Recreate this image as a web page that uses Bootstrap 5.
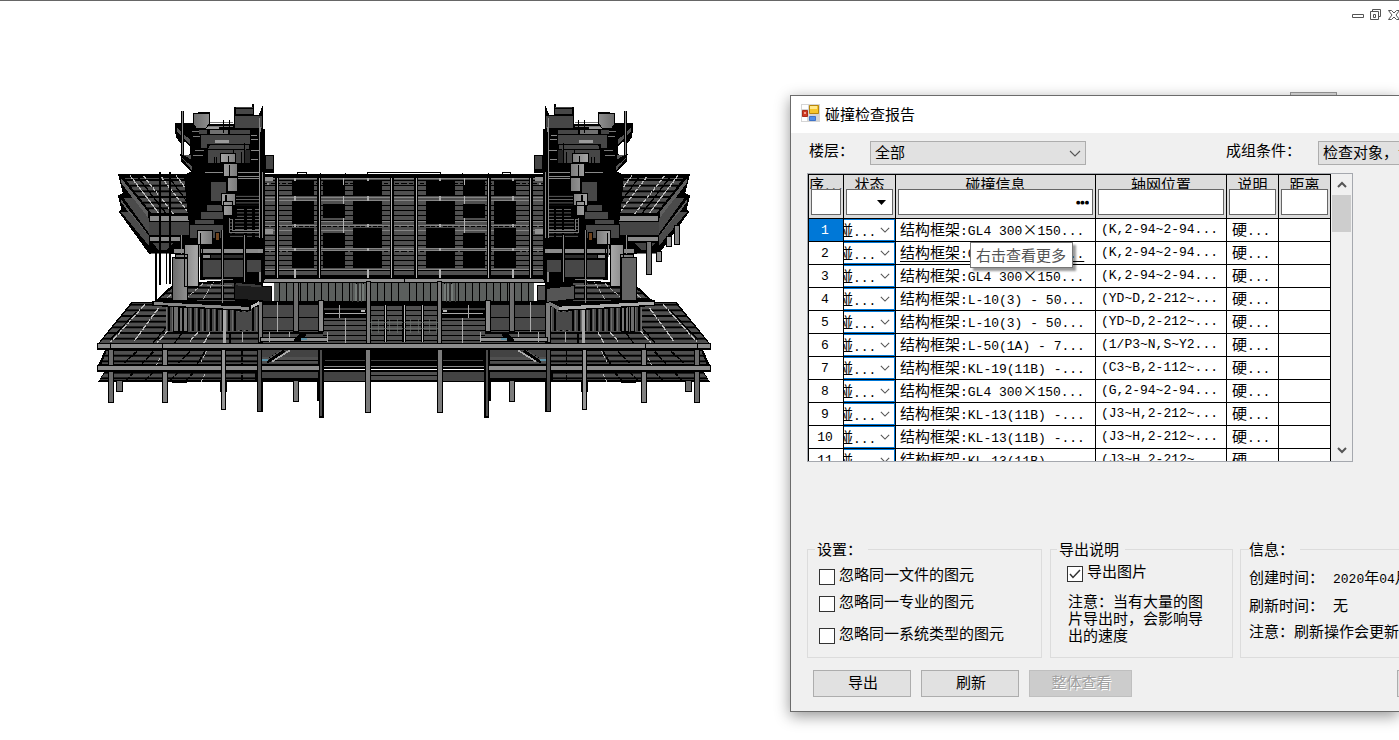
<!DOCTYPE html>
<html lang="zh-CN">
<head>
<meta charset="utf-8">
<meta name="viewport" content="width=device-width, initial-scale=1">
<title>碰撞检查报告</title>
<link href="https://cdn.jsdelivr.net/npm/bootstrap@5.3.0/dist/css/bootstrap.min.css" rel="stylesheet">
<style>
body{font:15px/18px "Noto Sans CJK SC",sans-serif;color:#000;background:#fff;overflow:hidden;min-height:100vh}
.la{font:13px/18px "Liberation Mono",monospace;white-space:pre}
.workspace{display:grid;grid-template-columns:790fr 609fr;border-top:1px solid #666;min-height:100vh;position:relative}
.model{width:100%;max-width:630px;margin:94px 0 0 90px;display:block}
.winctl{position:absolute;right:0;top:7px;line-height:0}
.behind{position:absolute;right:62px;top:91px;width:47px;height:12px;border:1px solid #999;background:#ddd}
.dlg{position:relative;margin-top:94px;align-self:start;min-width:0;background:#f0f0f0;border:1px solid #6b6b6b;border-right:0;box-shadow:0 4px 14px rgba(0,0,0,.42)}
.dlg-inner{overflow:hidden}
.titlebar{height:37px;background:#fff;padding:0 0 2px 10px;gap:5px}
.body-pad{padding:8px 0 14px 16px}
.floor-label{width:63px;padding-left:2px}
.cond-label{width:215px}
.combo{appearance:none;height:24px;border:1px solid #adadad;border-radius:0;background:#e1e1e1 no-repeat right 4px center/12px 7px url("data:image/svg+xml,%3Csvg xmlns='http://www.w3.org/2000/svg' viewBox='0 0 12 7'%3E%3Cpath d='M1 1l5 5 5-5' fill='none' stroke='%23555' stroke-width='1.1'/%3E%3C/svg%3E");padding:0 20px 2px 4px;line-height:18px;color:#000;width:216px}
.cond{margin-left:17px}
.gridbox{width:546px;height:289px;border:1px solid #a5a8ae;overflow:hidden;margin-top:8px}
.clash{table-layout:fixed;border-collapse:separate;border-spacing:0;width:523px;border:solid #000;border-width:1px 0 0 1px;background:#fff;flex:none;align-self:flex-start}
.clash th,.clash td{border:solid #000;border-width:0 1px 1px 0;padding:0;font-weight:400;white-space:nowrap;overflow:hidden}
.clash th{height:44px;background:#dcdcdc;text-align:center;vertical-align:top}
.clash td{height:23px;line-height:18px;padding:0 0 0 4px;vertical-align:top}
.clash td>span{display:block;height:22px;padding-top:1px}
.hd{display:block;height:14px;line-height:17px;overflow:hidden}
.no-hd .la{font-size:11px}
.filter{display:block;margin:0 2px;width:calc(100% - 4px);height:26px;border:1px solid #666;border-radius:0;background:#fff;padding:0 3px;text-align:right;color:#000;font:bold 5px/22px "DejaVu Sans",sans-serif}
select.filter{appearance:none;background:#fff no-repeat right 6px center/9px 5px url("data:image/svg+xml,%3Csvg xmlns='http://www.w3.org/2000/svg' viewBox='0 0 9 5'%3E%3Cpath d='M0 0h9L4.5 5z'/%3E%3C/svg%3E")}
.clash td.no{text-align:center;padding:0 2px 0 0}
.clash .no .la{padding-top:3px}
.clash td.pos,.clash td.say{padding-left:5px}
.clash .pos .la{padding-top:2px}
.sel{background:#0078d7;color:#fff}
.clash td.st{padding:0;position:relative}
.st select{appearance:none;display:block;width:100%;height:22px;border:1px solid #0078d7;border-left:0;border-radius:0;color:transparent;background:#fff no-repeat right 4px center/10px 6px url("data:image/svg+xml,%3Csvg xmlns='http://www.w3.org/2000/svg' viewBox='0 0 12 7'%3E%3Cpath d='M1 1l5 5 5-5' fill='none' stroke='%23555' stroke-width='1.3'/%3E%3C/svg%3E")}
.st label{position:absolute;left:-6px;top:2px;pointer-events:none}
.more{text-decoration:underline;text-underline-offset:3px}
.vbar{width:21px;background:#f0f0f0}
.vbar svg{display:block;margin:7px auto 0}
.thumb{width:19px;height:37px;background:#cdcdcd;margin:6px 0 0 1px}
.vbar .down{margin-top:214px}
.tip{position:absolute;left:179px;top:146px;z-index:2;background:#fff;border:1px solid #767676;color:#555;padding:3px 6px 3px 5px;box-shadow:3px 3px 2px rgba(0,0,0,.4)}
.groups{margin-top:77px;display:grid;grid-template-columns:235px 184px 220px;column-gap:7px}
.grp{border:1px solid #dcdcdc;height:119px;padding:0 0 0 11px;min-width:0}
.grp.mid{padding-left:16px;margin-left:1px}
.grp legend{float:none;width:auto;font-size:15px;line-height:20px;margin:0 0 6px -4px;padding:0 6px 0 2px}
.grp.mid legend{margin:0 0 3px -10px}
.grp.last legend{margin:0 0 9px;padding-left:0}
.tick{appearance:none;width:16px;height:16px;border:1px solid #333;background:#fff;margin:4px 4px 0 0;flex:none}
.tick:checked{background:#fff url("data:image/svg+xml,%3Csvg xmlns='http://www.w3.org/2000/svg' viewBox='0 0 14 14'%3E%3Cpath d='M2 7l3 3.5L12 3' fill='none' stroke='%23333' stroke-width='1.5'/%3E%3C/svg%3E")}
.opt{margin-bottom:7px}
.opt.far{margin-top:12px}
.note{line-height:17px;width:145px;padding-left:1px;margin-top:10px}
.info{column-gap:9px;margin-bottom:8px}
.info .la{line-height:16px}
.actions{padding-left:6px;gap:10px;margin-top:12px}
.dbtn{width:98px;height:27px;border:1px solid #adadad;border-radius:0;background:#e1e1e1;color:#000;font-size:15px;line-height:18px;padding:0 0 4px 2px;flex:none}
.dbtn:disabled{width:103px;background:#ccc;border-color:#bfbfbf;color:#a0a0a0;opacity:1;text-shadow:1px 1px #fff}
.dbtn.close-dlg{margin-left:255px}
</style>
</head>
<body>
<div class="workspace">
<main>
<svg class="model" viewBox="0 0 1890 990" shape-rendering="crispEdges" role="img" aria-label="结构模型">
<defs>
<pattern id="deck" width="40" height="17" patternUnits="userSpaceOnUse"><path d="M0 0h40v17H0z"/><path fill="#4f4f4f" d="M0 4h40v10H0z"/></pattern>
<pattern id="wall" width="40" height="15" patternUnits="userSpaceOnUse"><path d="M0 0h40v15H0z"/><path fill="#505050" d="M0 3h40v11H0z"/></pattern>
<pattern id="stair" width="40" height="10" patternUnits="userSpaceOnUse"><path d="M0 0h40v10H0z"/><path fill="#707070" d="M0 3h40v3H0z"/></pattern>
<pattern id="fins" width="21" height="60" patternUnits="userSpaceOnUse"><path fill="#5b5f5d" d="M0 0h21v60H0z"/><path d="M0 0h3v60H0z"/></pattern>
<pattern id="posts" width="18" height="60" patternUnits="userSpaceOnUse"><path fill="#484848" d="M0 0h18v60H0z"/><path d="M0 0h6v60H0z"/><path fill="#6d6d6d" d="M11 0h3v60h-3z"/></pattern>
<linearGradient id="cyl"><stop stop-color="#6b6b6b"/><stop offset=".6" stop-color="#a6a6a6"/><stop offset="1" stop-color="#7a7a7a"/></linearGradient>
</defs>
<g id="half">
<!-- central facade -->
<path d="M520 238h422v320H520z"/><path fill="url(#wall)" d="M525 250h417v290H525z"/>
<path stroke="#858585" stroke-width="3" d="M525 250h417M525 307h417M525 316h417M525 378h417M525 391h417M525 407h417M525 460h417M525 466h417M525 523h417"/>
<path stroke="#000" stroke-width="3" stroke-dasharray="12 5" d="M525 266h417M525 395h417M525 470h417"/>
<path d="M607 258h65v46h-65zM607 318h65v68h-65zM607 399h65v61h-65zM607 468h65v52h-65zM699 258h66v45h-66zM699 327h66v43h-66zM699 414h66v46h-66zM699 468h66v52h-66zM790 258h86v46h-86zM790 318h86v68h-86zM790 399h86v61h-86zM790 468h86v52h-86z"/>
<path stroke="#000" stroke-width="12" d="M562 248v300M688 248v300M905 248v300"/>
<path stroke="#b2b2b2" stroke-width="4" d="M562 248v300M688 248v300M905 248v300M760 248v22M760 303v25M760 370v44M834 522v30M615 522v30"/>
<path fill="#aaa" d="M612 248h6v10h-6zM612 304h6v13h-6zM612 386h6v10h-6zM612 460h6v9h-6zM831 248h6v10h-6zM831 303h6v15h-6zM831 386h6v10h-6zM831 460h6v9h-6z"/>
<path fill="#909090" d="M525 247h24v12h-24zM530 265h6v6h-6zM525 403h24v14h-24z"/>
<path fill="none" stroke="#000" stroke-width="3" d="M618 240l6-7h24v8M690 240v-6M766 240v-5M833 237v-6h109"/>
<!-- podium behind awning -->
<path d="M190 622l60-55 270-20v80z"/><path fill="url(#deck)" d="M205 615l50-42 180-10v55z"/>
<path fill="none" stroke="#aaa" stroke-width="3" stroke-dasharray="14 5" d="M232 608l60-48M286 612l60-52M340 612l30-50"/>
<!-- roof deck -->
<path d="M125 620h817v128H22z"/><path fill="url(#deck)" d="M128 624h120v84h694v36H30z"/>
<path stroke="#bcbcbc" stroke-width="4" stroke-dasharray="17 4" fill="none" d="M165 628L62 742M205 640l-75 102M262 675l-60 68M325 710l-28 32M360 712l-18 32"/>
<path stroke="#000" stroke-width="4" d="M140 650L60 735M235 690l-45 53M280 710l-26 33M420 710v35"/>
<path fill="url(#posts)" d="M228 635h290v73H228z"/><path fill="#494949" d="M440 650h44v55h-44z"/><path stroke="#aaa" stroke-width="8" d="M404 640v105"/><path stroke="#aaa" stroke-width="3" d="M457 712v30"/>
<path fill="url(#cyl)" stroke="#000" stroke-width="3" d="M250 630h14v78h-14zM268 630h10v78h-10zM281 630h10v78h-10zM504 620h14v123h-14z"/>
<!-- lobby -->
<path fill="url(#fins)" d="M552 565h390v55H552z"/><path d="M520 619h422v10H520z"/><path fill="#494949" d="M519 630h165v36H519zM519 669h165v37H519z"/>
<path fill="url(#wall)" d="M700 670h242v74H700zM842 630h100v40H842z"/>
<path fill="#3e3e3e" d="M700 640h130v4H700z"/>
<path fill="#747a77" d="M795 567h28v51h-28z"/><path stroke="#333" stroke-width="4" d="M787 565v55M804 565v55M815 565v55"/>
<path fill="#919191" stroke="#000" stroke-width="3" d="M520 551h422v12H520zM512 728h200v10H512z"/>
<path stroke="#aaa" stroke-width="3" d="M562 620v90M704 655h125M748 631v38M766 670v73M538 711v30M598 711v15M712 711v30"/>
<path fill="#bbb" d="M813 645h12v5h-12z"/>
<path fill="url(#cyl)" stroke="#000" stroke-width="3" d="M611 563h14v145h-14zM684 616h15v92h-15zM829 560h12v185h-12z"/>
<path stroke="#000" stroke-width="9" d="M887 630v112M941 630v112"/>
<path stroke="#bbb" stroke-width="4" d="M887 630v112M941 630v112"/><path stroke="#6b716e" stroke-width="2" d="M845 672v42M865 672v42M898 672v42M922 672v42M840 682h102M840 700h102"/>
<path d="M610 735l20-20h18v8l-24 20z"/><path fill="#5a8ea3" d="M632 728h18v6h-18z"/>
<!-- lower floors -->
<path d="M45 765h897v50H22zM45 826h897v34H25z"/><path fill="url(#deck)" d="M50 768h452v38H35zM45 832h450v22H30z"/>
<path fill="#434343" d="M512 766h172v40H512zM515 832h170v16H515zM700 832h130v26H700z"/><path fill="url(#wall)" d="M842 832h100v22H842zM515 785h170v18H515z"/>
<path stroke="#424242" stroke-width="4" d="M705 796h237"/><path stroke="#000" stroke-width="5" stroke-dasharray="14 4" d="M140 770l-40 36M190 770l-36 38M300 770l-35 35M345 770l-24 38M130 832l-24 28M190 832l-30 28M265 832l-25 25M310 832l-22 26M455 768v90"/>
<path stroke="#bbb" stroke-width="3" stroke-dasharray="9 6" d="M350 768l-20 40M345 838l-12 22M210 790l-10 20"/>
<path stroke="#aaa" stroke-width="5" fill="none" d="M600 766l-55 34"/><path stroke="#000" stroke-width="12" d="M582 766l-52 34"/><path stroke="#555" stroke-width="3" d="M575 766l-50 33"/><path fill="#5a8ea3" d="M516 791h18v6h-18z"/>
<path fill="url(#cyl)" stroke="#000" stroke-width="3" d="M79 855h18v33H79zM611 855h15v64h-15z"/><path d="M390 855h20v35h-20zM510 855h9v95h-9zM680 855h12v64h-12zM245 858h46v6h-46z"/>
<path fill="#8c8c8c" stroke="#000" stroke-width="4" d="M23 745h919v17H23zM23 811h919v8H690v9H23z"/>
<path fill="#8c8c8c" d="M936 747h10v13h-10zM936 813h10v4h-10z"/>
<path fill="url(#cyl)" stroke="#000" stroke-width="3" d="M56 763h14v48H56zM56 829h14v92H56zM216 763h15v48h-15zM216 829h15v92h-15zM394 763h12v179h-12zM827 763h14v188h-14z"/>
<path fill="#4d4d4d" stroke="#000" stroke-width="4" d="M503 763h11v187h-11zM689 763h10v203h-10z"/><path stroke="#000" stroke-width="3" d="M218 745v18M61 745v18"/>
<!-- canopy wing -->
<path d="M84 238h210l60 142-2 98H178L86 350l8-8-10-40 14-8z"/>
<path fill="url(#deck)" d="M102 248h180l52 106H184z"/>
<path fill="#5f5f5f" d="M92 248l82 102v20L92 262zM92 312l80 104v12L92 320z"/><path fill="#4b4b4b" d="M100 308h28l48 62v44zM94 352h24l60 72v30z"/>
<path stroke="#bcbcbc" stroke-width="4" stroke-dasharray="12 3" d="M120 242l86 112M160 242l90 114M214 246l84 110M258 242l84 110"/>
<path stroke="#000" stroke-width="4" d="M145 248l82 106M238 248l78 106"/>
<path fill="#8a8a8a" d="M180 363h148v14H180zM180 427h90v10h-90z"/><path fill="#444" d="M178 381h150v40H178z"/><path fill="#444" d="M190 445h60l-20 20h-25z"/><path stroke="#777" stroke-width="3" d="M182 475h62"/>
<!-- tower -->
<path d="M255 85h70V52h35v35h73V35h54V28h5v32h14l12-28v70h6v78h27v55h-25v320H330V480h-30v-70l-10-80-8-90 22-10-30-30-3-22 30 8-20-30-24-30z"/>
<path fill="#fff" d="M281 138l20 16v22h-17z"/>
<path fill="#555" d="M262 100l38 34v14l-38-38zM280 180h24v14zM275 188l30 25v12z"/>
<path stroke="#777" stroke-width="3" d="M320 82h110M345 95h85M305 110h30M310 125h20M315 165h28M310 180h30"/>
<path fill="#464646" d="M437 37h51v20h-51zM436 64h79v36h-79zM328 106h24v12h-24zM420 106h60v10h-60zM333 120h147v26H350v12h-17zM360 150h118v12h-10v42H354v-40zM528 184h22v38h-22z"/>
<path fill="#707070" d="M360 104h55v12h-55z"/><path fill="#9a9a9a" d="M348 95h40v7h-40zM374 136h42v7h-42z"/>
<path stroke="#000" stroke-width="3" fill="none" d="M437 40h53M436 62h79M400 75v40M418 75v40M354 162h110M372 185v20M380 185v20M430 162v42M455 172v50M463 145v60"/>
<path stroke="#888" stroke-width="3" d="M482 122h20M482 134h22M484 166h22M484 192h20M345 232h165M445 243h65M445 250h65M508 70v360M512 95v15M517 230v200"/><path fill="#272727" d="M466 164h14v40h-14z"/>
<path fill="url(#stair)" d="M428 298h78v34h-78zM440 335h66v95h-66zM420 372h30v60h-30z"/><path stroke="#000" stroke-width="7" d="M466 335v95M490 335v95M430 360v60"/>
<path fill="none" stroke="#777" stroke-width="3" d="M418 368v44h90M427 372v34h80"/>
<path fill="#484848" stroke="#000" stroke-width="3" d="M362 258h48v60h-48zM348 328h48v20h-48zM330 350h70v22h-70zM312 374h60v14h-60zM297 388h102v42H297z"/>
<path fill="url(#cyl)" stroke="#000" stroke-width="3" d="M310 55h48v32l-12 14h-26l-10-12zM390 176h46v27h-46zM400 204h42v39h-42zM412 248h31v40h-31zM393 296h42v36h-42zM401 320h25v40h-25z"/>
<path stroke="#000" stroke-width="4" d="M418 210v33M415 182v20M408 300v18"/><path fill="#70451f" stroke="#000" stroke-width="3" d="M376 412h13v23h-13z"/>
<path fill="none" stroke="#000" stroke-width="9" d="M277 48v132"/><path fill="none" stroke="#888" stroke-width="3" d="M277 48v132"/>
<path fill="#8b8b8b" stroke="#000" stroke-width="3" d="M250 461h270v15H250z"/><path fill="#474747" stroke="#000" stroke-width="3" d="M334 493h126v53H334zM470 492h44v40h-44z"/><path fill="#909090" d="M335 480h24v9h-24zM503 462h8v13h-8z"/><path fill="#2b2b2b" d="M362 480h100v9H362z"/>
<path stroke="#000" stroke-width="10" d="M397 405v210M463 420v140"/><path stroke="#888" stroke-width="4" d="M397 405v220M463 420v140M510 530v30M330 415v70M274 420v60"/>
<path fill="url(#cyl)" stroke="#000" stroke-width="3" d="M322 405h44v42h-44zM283 447h41v126h-41zM255 479h38v10h-38zM248 487h44v130h-44z"/><path stroke="#000" stroke-width="4" d="M332 415v70M338 446v108"/>
<path stroke="#777" stroke-width="3" d="M345 553h85M350 572h75"/>
</g>
<use href="#half" transform="matrix(-1 0 0 1 1884 0)"/>
<!-- parts that differ on each side -->
<path fill="#1d1d1d" stroke="#000" stroke-width="3" d="M433 564l112 12v44l-112-8z"/><path fill="#383838" d="M438 564l75 6v7l-75-6z"/>
<path fill="#888" stroke="#000" stroke-width="4" d="M189 619l291 15v13l-291-16z"/><path fill="#bbb" d="M482 642l26-14v-10l-26 14z"/>
<path stroke="#000" stroke-width="5" d="M210 232v337M240 232v335M198 470v150M229 470v98"/>
<path fill="#555" stroke="#000" stroke-width="3" d="M1370 580l82-8v40l-82 10zM1342 572h24v44h-24z"/>
<path fill="#aaa" stroke="#000" stroke-width="4" d="M1406 633l288-15v13l-288 16z"/><path fill="#777" d="M1378 620l28 14v12l-28-16z"/>
<path fill="#646464" stroke="#000" stroke-width="3" d="M1595 486h43v130h-43z"/>
<path fill="url(#cyl)" stroke="#000" stroke-width="3" d="M1668 440h15v97h-15zM1700 470h14v29h-14zM1730 425h14v30h-14zM1754 390h14v58h-14z"/>
</svg>
</main>
<div class="winctl"><svg width="48" height="14" viewBox="0 0 48 14" fill="none" stroke="#555"><path d="M1.500 6.500h11v3h-11zM21.500 3.500v-2h8v7h-2M19.500 3.500h8v8h-8zM22.500 6.500h2v3h-2z"/><path d="M37.500 2.500h3l2.500 2.500 2.500-2.500h3l-3.500 4.500 3.500 4.500h-3l-2.500-2.500-2.500 2.500h-3l3.500-4.500z"/></svg></div>
<div class="behind"></div>
<section class="dlg" aria-label="碰撞检查报告">
<div class="dlg-inner">
<div class="titlebar d-flex align-items-center">
<svg width="19" height="19" viewBox="0 0 19 19"><path fill="#d5d5d5" d="M0 0h19v18H0z"/><path fill="#fff" d="M1 1h6v4H1zM1 13h5v4H1z"/><path fill="#f6c52b" stroke="#b8860b" d="M8.500 1.500h9v8h-9z"/><path fill="#ffe88b" d="M9 2h7v3H9z"/><path fill="#cf3a22" stroke="#a82c1b" d="M1.500 6.500h5v6h-5z"/><path fill="#f0a090" d="M3 8h2v2H3z"/><path fill="#4f8eea" stroke="#3f73c8" d="M8.500 12.500h6v4h-6z"/></svg>
<span>碰撞检查报告</span>
</div>
<div class="body-pad">
<div class="d-flex text-nowrap">
<label for="floor" class="floor-label flex-shrink-0">楼层：</label>
<select id="floor" class="combo flex-shrink-0"><option>全部</option></select>
<label for="cond" class="cond-label flex-shrink-0 text-end">成组条件：</label>
<select id="cond" class="combo cond flex-shrink-0"><option>检查对象，专业</option></select>
</div>
<div class="gridbox d-flex">
<table class="clash">
<colgroup><col style="width:35px"><col style="width:52px"><col style="width:200px"><col style="width:131px"><col style="width:52px"><col style="width:52px"></colgroup>
<thead><tr>
<th><span class="hd no-hd text-start">序<span class="la">...</span></span><input class="filter" aria-label="序号"></th>
<th><span class="hd">状态</span><select class="filter" aria-label="状态"><option></option></select></th>
<th><span class="hd">碰撞信息</span><input class="filter" aria-label="碰撞信息" value="●●●"></th>
<th><span class="hd">轴网位置</span><input class="filter" aria-label="轴网位置"></th>
<th><span class="hd">说明</span><input class="filter" aria-label="说明"></th>
<th><span class="hd">距离</span><input class="filter" aria-label="距离"></th>
</tr></thead>
<tbody id="rows"></tbody>
</table>
<div class="vbar"><svg width="10" height="8" viewBox="0 0 10 8"><path d="M1 6l4-4 4 4" fill="none" stroke="#555" stroke-width="2"/></svg><div class="thumb"></div><svg class="down" width="10" height="8" viewBox="0 0 10 8"><path d="M1 2l4 4 4-4" fill="none" stroke="#555" stroke-width="2"/></svg></div>
</div>
<div class="groups">
<fieldset class="grp"><legend>设置：</legend>
<div class="d-flex opt"><input class="tick" type="checkbox" id="c1"><label for="c1">忽略同一文件的图元</label></div>
<div class="d-flex opt"><input class="tick" type="checkbox" id="c2"><label for="c2">忽略同一专业的图元</label></div>
<div class="d-flex opt far"><input class="tick" type="checkbox" id="c3"><label for="c3">忽略同一系统类型的图元</label></div>
</fieldset>
<fieldset class="grp mid"><legend>导出说明</legend>
<div class="d-flex"><input class="tick" type="checkbox" id="c4" checked><label for="c4">导出图片</label></div>
<div class="note">注意：当有大量的图片导出时，会影响导出的速度</div>
</fieldset>
<fieldset class="grp last ps-2 text-nowrap"><legend>信息：</legend>
<div class="d-flex info"><span>创建时间：</span><span><span class="la">2020</span>年<span class="la">04</span>月</span></div>
<div class="d-flex info"><span>刷新时间：</span><span>无</span></div>
<div>注意：刷新操作会更新数据</div>
</fieldset>
</div>
<div class="d-flex actions">
<button class="dbtn" type="button">导出</button><button class="dbtn" type="button">刷新</button><button class="dbtn" type="button" disabled>整体查看</button>
<button class="dbtn close-dlg" type="button">关闭</button>
</div>
</div>
</div>
<div class="tip" role="tooltip">右击查看更多</div>
</section>
</div>
<script>
const rows=[["GL4 300×150...","(K,2-94~2-94..."],["GL4 300×150...","(K,2-94~2-94..."],["GL4 300×150...","(K,2-94~2-94..."],["L-10(3) - 50...","(YD~D,2-212~..."],["L-10(3) - 50...","(YD~D,2-212~..."],["L-50(1A) - 7...","(1/P3~N,S~Y2..."],["KL-19(11B) -...","(C3~B,2-112~..."],["GL4 300×150...","(G,2-94~2-94..."],["KL-13(11B) -...","(J3~H,2-212~..."],["KL-13(11B) -...","(J3~H,2-212~..."],["KL-13(11B) -...","(J3~H,2-212~..."]];
document.getElementById("rows").innerHTML=rows.map(([a,b],i)=>`<tr><td class="no${i?"":" sel"}"><span class="la">${i+1}</span></td><td class="st"><select id="s${i}"><option>碰撞</option></select><label for="s${i}">碰<span class="la">...</span></label></td><td><span class="${i===1?"more":""}">结构框架<span class="la">:${a.replace("×","</span>×<span class='la'>")}</span></span></td><td class="pos"><span class="la">${b}</span></td><td class="say"><span>硬<span class="la">...</span></span></td><td></td></tr>`).join("");
</script>
<script src="https://cdn.jsdelivr.net/npm/bootstrap@5.3.0/dist/js/bootstrap.bundle.min.js"></script>
</body>
</html>
